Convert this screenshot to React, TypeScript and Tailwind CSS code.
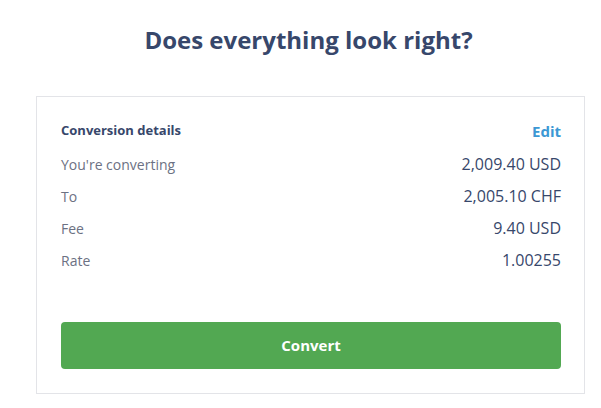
import React from 'react';

const rows = [
  { label: "You're converting", value: '2,009.40 USD' },
  { label: 'To', value: '2,005.10 CHF' },
  { label: 'Fee', value: '9.40 USD' },
  { label: 'Rate', value: '1.00255' },
];

export default function App() {
  return (
    <div className="min-h-[408px] w-[601px] bg-white font-['Open_Sans','Lato',sans-serif]">
      <h1 className="pl-[16px] pt-[22px] text-center text-[24px] font-bold leading-[36px] text-[#37476b]">
        Does everything look right?
      </h1>
      <div className="ml-[36px] mt-[38px] w-[549px] border border-[#e3e4e8] pl-[24px] pr-[23px] pt-[22px] pb-[24px]">
        <div className="flex h-[24px] items-center justify-between">
          <span className="text-[13px] font-bold text-[#37476b]">Conversion details</span>
          <span className="text-[15px] font-bold text-[#3c98d4]">Edit</span>
        </div>
        <div className="mt-[5px] flex flex-col">
          {rows.map((r) => (
            <div key={r.label} className="flex h-[32px] items-center justify-between">
              <span className="text-[14px] text-[#6c7183]">{r.label}</span>
              <span className="text-[16px] text-[#37476b]">{r.value}</span>
            </div>
          ))}
        </div>
        <button className="mt-[46px] h-[47px] w-full rounded-[4px] bg-[#52a852] text-[15px] font-bold text-white">
          Convert
        </button>
      </div>
    </div>
  );
}
